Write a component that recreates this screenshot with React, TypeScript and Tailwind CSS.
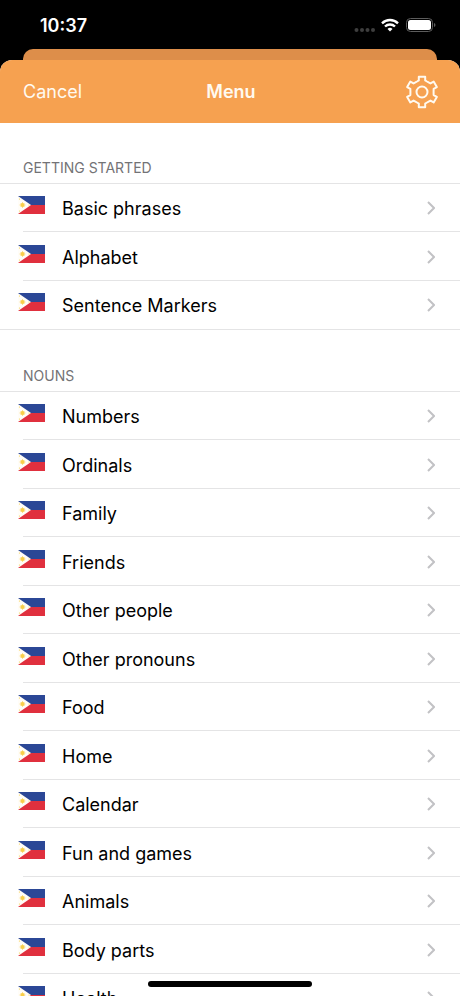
import React from "react";

const sections = [
  { title: "Getting started", items: ["Basic phrases", "Alphabet", "Sentence Markers"] },
  {
    title: "Nouns",
    items: [
      "Numbers",
      "Ordinals",
      "Family",
      "Friends",
      "Other people",
      "Other pronouns",
      "Food",
      "Home",
      "Calendar",
      "Fun and games",
      "Animals",
      "Body parts",
      "Health",
    ],
  },
];

// One tooth of the gear in coordinates centred on the hub, repeated every 60 degrees.
const tooth = [
  [-5, -10.5],
  [-3.2, -11.6],
  [-3.2, -15.3],
  [3.2, -15.3],
  [3.2, -11.6],
  [5, -10.5],
];

const gearPoints = [0, 60, 120, 180, 240, 300]
  .flatMap((deg) => {
    const a = (deg * Math.PI) / 180;
    return tooth.map(([x, y]) =>
      [x * Math.cos(a) - y * Math.sin(a), x * Math.sin(a) + y * Math.cos(a)]
        .map((n) => n.toFixed(2))
        .join(","),
    );
  })
  .join(" ");

function Gear() {
  return (
    <svg viewBox="-17 -17 34 34" className="size-[34px]" fill="none" stroke="currentColor" strokeWidth="2" strokeLinejoin="round" aria-hidden="true">
      <polygon points={gearPoints} />
      <circle r="5.5" />
    </svg>
  );
}

function Flag() {
  return (
    <svg viewBox="0 0 27 18" className="h-[18px] w-[27px] shrink-0" aria-hidden="true">
      <path d="M0 0H27V9H0Z" fill="#2b4796" />
      <path d="M0 9H27V18H0Z" fill="#e0303e" />
      <path d="M0 0L13 9L0 18Z" fill="#fffdf8" />
      <circle cx="4.5" cy="9" r="2" fill="#f8cf4a" />
      <path d="M4.5 6V12M1.500 9H7.500M2.500 7L6.500 11M6.500 7L2.500 11" stroke="#f8cf4a" strokeWidth="0.6" />
      <circle cx="1.500" cy="3" r="0.6" fill="#f8cf4a" />
      <circle cx="1.500" cy="15" r="0.6" fill="#f8cf4a" />
      <circle cx="11" cy="9" r="0.6" fill="#f8cf4a" />
    </svg>
  );
}

function Chevron() {
  return (
    <svg viewBox="0 0 8 14" className="h-3.5 w-2 shrink-0" fill="none" stroke="#c2c2c5" strokeWidth="2" aria-hidden="true">
      <path d="M1 1L7 7L1 13" />
    </svg>
  );
}

function StatusBar() {
  return (
    <div className="flex h-[49px] shrink-0 items-center justify-between pr-6 pl-10 text-white">
      <time className="pt-0.5 text-lg font-semibold">10:37</time>
      <div className="flex items-center">
        <svg viewBox="0 0 22 14" className="mr-1.5 h-3.5 w-[22px]" fill="#3e3e3e" aria-hidden="true">
          <circle cx="3.500" cy="12" r="2" />
          <circle cx="9" cy="12" r="2" />
          <circle cx="14.500" cy="12" r="2" />
          <circle cx="20" cy="12" r="2" />
        </svg>
        <svg viewBox="0 0 18 14" className="mr-[7px] h-3.5 w-[18px]" fill="none" stroke="currentColor" strokeWidth="2.400" aria-hidden="true">
          <path d="M1 5.300A11.500 11.500 0 0 1 17 5.300" />
          <path d="M4 8.500A7.200 7.200 0 0 1 14 8.500" />
          <path d="M9 13.500L6.500 11A3.600 3.600 0 0 1 11.500 11Z" fill="currentColor" stroke="none" />
        </svg>
        <svg viewBox="0 0 30 14" className="h-3.5 w-[30px]" aria-hidden="true">
          <rect x="0.500" y="0.500" width="26" height="13" rx="4" fill="none" stroke="#5c5c5c" />
          <rect x="2" y="2" width="23" height="10" rx="2.500" fill="#fff" />
          <path d="M28 5V9Q29.500 8.500 29.500 7T28 5Z" fill="#5c5c5c" />
        </svg>
      </div>
    </div>
  );
}

export default function App() {
  return (
    <div className="relative flex h-screen flex-col overflow-hidden bg-black font-['Inter','Liberation_Sans',sans-serif] text-black">
      <StatusBar />
      <div className="mx-[23px] h-[11px] shrink-0 rounded-t-[10px] bg-[#dd8e4a]" />
      <div className="flex min-h-0 flex-1 flex-col overflow-hidden rounded-t-xl bg-white">
        <header className="grid h-[63px] shrink-0 grid-cols-3 items-center bg-[#f6a150] pr-[21px] pl-[23px] text-lg text-[#fffaf0]">
          <button type="button" className="justify-self-start">Cancel</button>
          <h1 className="justify-self-center font-semibold">Menu</h1>
          <button type="button" aria-label="Settings" className="justify-self-end">
            <Gear />
          </button>
        </header>
        <main className="min-h-0 flex-1 space-y-px overflow-y-auto [scrollbar-width:none]">
          {sections.map((section) => (
            <section key={section.title}>
              <h2 className="flex h-[61px] items-end border-b border-[#e4e4e5] px-[23px] pb-[5px] text-sm text-[#737376] uppercase">
                {section.title}
              </h2>
              <ul className="border-b border-[#e4e4e5]">
                {section.items.map((item) => (
                  <li key={item} className="group h-12 pl-[18px] even:h-[49px]">
                    <a href="#" className="flex h-full items-center">
                      <span className="pb-1.5">
                        <Flag />
                      </span>
                      <span className="flex-1 pt-0.5 pl-[17px] text-lg">{item}</span>
                      <span className="pr-[25px]">
                        <Chevron />
                      </span>
                    </a>
                    <div className="-mt-px ml-[5px] h-px bg-[#e4e4e5] group-last:hidden" />
                  </li>
                ))}
              </ul>
            </section>
          ))}
        </main>
      </div>
      <div className="absolute bottom-[9px] left-1/2 h-1.5 w-[164px] -translate-x-1/2 rounded-full bg-black" />
    </div>
  );
}
